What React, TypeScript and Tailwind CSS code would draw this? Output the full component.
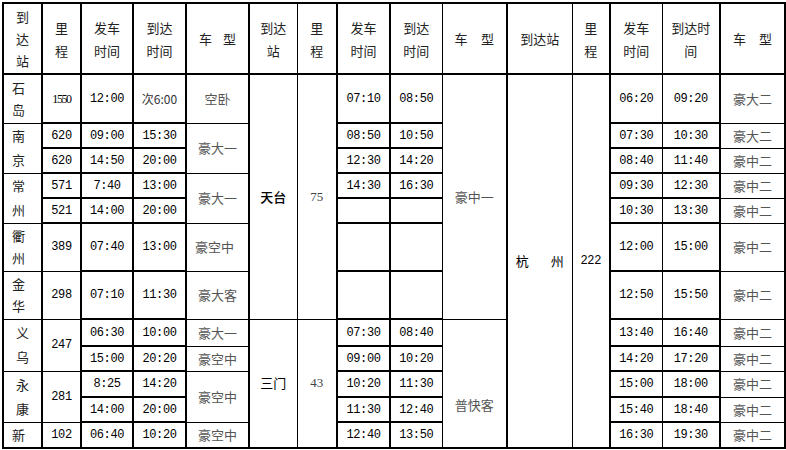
const td = 'border border-black p-0 text-center align-middle';
const thickL = 'border-l-2';
const num = "font-['Liberation_Mono','Noto_Sans_CJK_SC',monospace] text-[12px] tracking-[-0.4px] text-black";
const time = 'border-y-2';
const kind = 'text-[13px] text-[#555]';
const serifNum = "font-['Liberation_Serif',serif] text-[13px] text-[#444]";

const T = ({ v, l }: { v: string; l?: boolean }) => (
  <td className={`${td} ${time} ${num} ${l ? thickL : ''}`}>{v}</td>
);

const Kind = ({ v, rs, l }: { v: string; rs?: number; l?: boolean }) => (
  <td rowSpan={rs} className={`${td} ${kind} ${l ? thickL : ''}`}>{v}</td>
);

const Spread = ({ a, b }: { a: string; b: string }) => (
  <div className="flex justify-between px-[12px]">
    <span>{a}</span>
    <span>{b}</span>
  </div>
);

const Station = ({ a, b, lh, center }: { a: string; b: string; lh: string; center?: boolean }) => (
  <div className={`${lh} ${center ? 'text-center' : 'text-left pl-[8px]'}`}>
    {a}
    <br />
    {b}
  </div>
);

const rightRows = [
  ['06:20', '09:20', '豪大二'],
  ['07:30', '10:30', '豪大二'],
  ['08:40', '11:40', '豪中二'],
  ['09:30', '12:30', '豪中二'],
  ['10:30', '13:30', '豪中二'],
  ['12:00', '15:00', '豪中二'],
  ['12:50', '15:50', '豪中二'],
  ['13:40', '16:40', '豪中二'],
  ['14:20', '17:20', '豪中二'],
  ['15:00', '18:00', '豪中二'],
  ['15:40', '18:40', '豪中二'],
  ['16:30', '19:30', '豪中二'],
];

const Right = ({ i }: { i: number }) => (
  <>
    <T v={rightRows[i][0]} l />
    <T v={rightRows[i][1]} />
    <Kind v={rightRows[i][2]} l />
  </>
);

export default function App() {
  return (
    <div className="w-[786px] h-[450px] bg-white overflow-hidden pt-[2px] pl-[2px]">
      <table className="table-fixed border-collapse border-2 border-black w-[784px] font-['Noto_Sans_CJK_SC',sans-serif] text-[13px] leading-[18px] text-[#222]">
        <colgroup>
          <col className="w-[39px]" />
          <col className="w-[39px]" />
          <col className="w-[52px]" />
          <col className="w-[53px]" />
          <col className="w-[63px]" />
          <col className="w-[48px]" />
          <col className="w-[40px]" />
          <col className="w-[53px]" />
          <col className="w-[52px]" />
          <col className="w-[65px]" />
          <col className="w-[65px]" />
          <col className="w-[38px]" />
          <col className="w-[52px]" />
          <col className="w-[58px]" />
          <col className="w-[65px]" />
        </colgroup>
        <tbody>
          {/* header */}
          <tr className="h-[71px] leading-[23px]">
            <td className={`${td} border-b-2 leading-[22px]`}>到<br />达<br />站</td>
            <td className={`${td} border-b-2 ${thickL}`}>里<br />程</td>
            <td className={`${td} border-b-2 ${thickL}`}>发车<br />时间</td>
            <td className={`${td} border-b-2 ${thickL}`}>到达<br />时间</td>
            <td className={`${td} border-b-2 ${thickL}`}><Spread a="车" b="型" /></td>
            <td className={`${td} border-b-2 ${thickL}`}>到达<br />站</td>
            <td className={`${td} border-b-2`}>里<br />程</td>
            <td className={`${td} border-b-2 ${thickL}`}>发车<br />时间</td>
            <td className={`${td} border-b-2 ${thickL}`}>到达<br />时间</td>
            <td className={`${td} border-b-2`}><Spread a="车" b="型" /></td>
            <td className={`${td} border-b-2 ${thickL}`}>到达站</td>
            <td className={`${td} border-b-2`}>里<br />程</td>
            <td className={`${td} border-b-2 ${thickL}`}>发车<br />时间</td>
            <td className={`${td} border-b-2`}>到达时<br />间</td>
            <td className={`${td} border-b-2 ${thickL}`}><Spread a="车" b="型" /></td>
          </tr>

          {/* r1 */}
          <tr className="h-[49px]">
            <td className={td}><Station a="石" b="岛" lh="leading-[22px]" /></td>
            <td className={`${td} ${thickL} font-['Liberation_Serif',serif] text-[12px] tracking-[-1.4px] text-black`}>1550</td>
            <T v="12:00" l />
            <td className={`${td} ${time} ${thickL} font-['Noto_Sans_CJK_SC',sans-serif] text-[12px] text-[#333]`}>次6:00</td>
            <Kind v="空卧" l />
            <td rowSpan={7} className={`${td} ${thickL} text-[13px] font-medium text-black`}>天台</td>
            <td rowSpan={7} className={`${td} ${serifNum}`}>75</td>
            <T v="07:10" l />
            <T v="08:50" l />
            <Kind v="豪中一" rs={7} />
            <td rowSpan={12} className={`${td} ${thickL} text-[13px] text-black`}>
              <div className="flex justify-center gap-[22px]"><span>杭</span><span>州</span></div>
            </td>
            <td rowSpan={12} className={`${td} ${num}`}>222</td>
            <Right i={0} />
          </tr>

          {/* r2 */}
          <tr className="h-[25px]">
            <td rowSpan={2} className={td}><Station a="南" b="京" lh="leading-[24px]" /></td>
            <td className={`${td} ${time} ${thickL} ${num}`}>620</td>
            <T v="09:00" l />
            <T v="15:30" l />
            <Kind v="豪大一" rs={2} l />
            <T v="08:50" l />
            <T v="10:50" l />
            <Right i={1} />
          </tr>

          {/* r3 */}
          <tr className="h-[25px]">
            <td className={`${td} ${time} ${thickL} ${num}`}>620</td>
            <T v="14:50" l />
            <T v="20:00" l />
            <T v="12:30" l />
            <T v="14:20" l />
            <Right i={2} />
          </tr>

          {/* r4 */}
          <tr className="h-[25px]">
            <td rowSpan={2} className={td}><Station a="常" b="州" lh="leading-[24px]" /></td>
            <td className={`${td} ${time} ${thickL} ${num}`}>571</td>
            <T v="7:40" l />
            <T v="13:00" l />
            <Kind v="豪大一" rs={2} l />
            <T v="14:30" l />
            <T v="16:30" l />
            <Right i={3} />
          </tr>

          {/* r5 */}
          <tr className="h-[25px]">
            <td className={`${td} ${time} ${thickL} ${num}`}>521</td>
            <T v="14:00" l />
            <T v="20:00" l />
            <T v="" l />
            <T v="" l />
            <Right i={4} />
          </tr>

          {/* r6 */}
          <tr className="h-[48px]">
            <td className={td}><Station a="衢" b="州" lh="leading-[22px]" /></td>
            <td className={`${td} ${thickL} ${num}`}>389</td>
            <T v="07:40" l />
            <T v="13:00" l />
            <td className={`${td} ${kind} ${thickL} text-left pl-[8px]`}>豪空中</td>
            <T v="" l />
            <T v="" l />
            <Right i={5} />
          </tr>

          {/* r7 */}
          <tr className="h-[48px]">
            <td className={td}><Station a="金" b="华" lh="leading-[22px]" /></td>
            <td className={`${td} ${thickL} ${num}`}>298</td>
            <T v="07:10" l />
            <T v="11:30" l />
            <Kind v="豪大客" l />
            <T v="" l />
            <T v="" l />
            <Right i={6} />
          </tr>

          {/* r8 */}
          <tr className="h-[27px]">
            <td rowSpan={2} className={td}><Station a="义" b="乌" lh="leading-[24px]" center /></td>
            <td rowSpan={2} className={`${td} ${thickL} ${num}`}>247</td>
            <T v="06:30" l />
            <T v="10:00" l />
            <Kind v="豪大一" l />
            <td rowSpan={5} className={`${td} ${thickL} text-[13px] text-black`}>三门</td>
            <td rowSpan={5} className={`${td} ${serifNum}`}>43</td>
            <T v="07:30" l />
            <T v="08:40" l />
            <td rowSpan={5} className={`${td} ${kind}`}>
              <div className="pt-[44px]">普快客</div>
            </td>
            <Right i={7} />
          </tr>

          {/* r9 */}
          <tr className="h-[25px]">
            <T v="15:00" l />
            <T v="20:20" l />
            <Kind v="豪空中" l />
            <T v="09:00" l />
            <T v="10:20" l />
            <Right i={8} />
          </tr>

          {/* r10 */}
          <tr className="h-[26px]">
            <td rowSpan={2} className={td}><Station a="永" b="康" lh="leading-[24px]" center /></td>
            <td rowSpan={2} className={`${td} ${thickL} ${num}`}>281</td>
            <T v="8:25" l />
            <T v="14:20" l />
            <Kind v="豪空中" rs={2} l />
            <T v="10:20" l />
            <T v="11:30" l />
            <Right i={9} />
          </tr>

          {/* r11 */}
          <tr className="h-[25px]">
            <T v="14:00" l />
            <T v="20:00" l />
            <T v="11:30" l />
            <T v="12:40" l />
            <Right i={10} />
          </tr>

          {/* r12 */}
          <tr className="h-[26px]">
            <td className={`${td} text-left pl-[8px]`}>新</td>
            <td className={`${td} ${thickL} ${num}`}>102</td>
            <T v="06:40" l />
            <T v="10:20" l />
            <Kind v="豪空中" l />
            <T v="12:40" l />
            <T v="13:50" l />
            <Right i={11} />
          </tr>
        </tbody>
      </table>
    </div>
  );
}
